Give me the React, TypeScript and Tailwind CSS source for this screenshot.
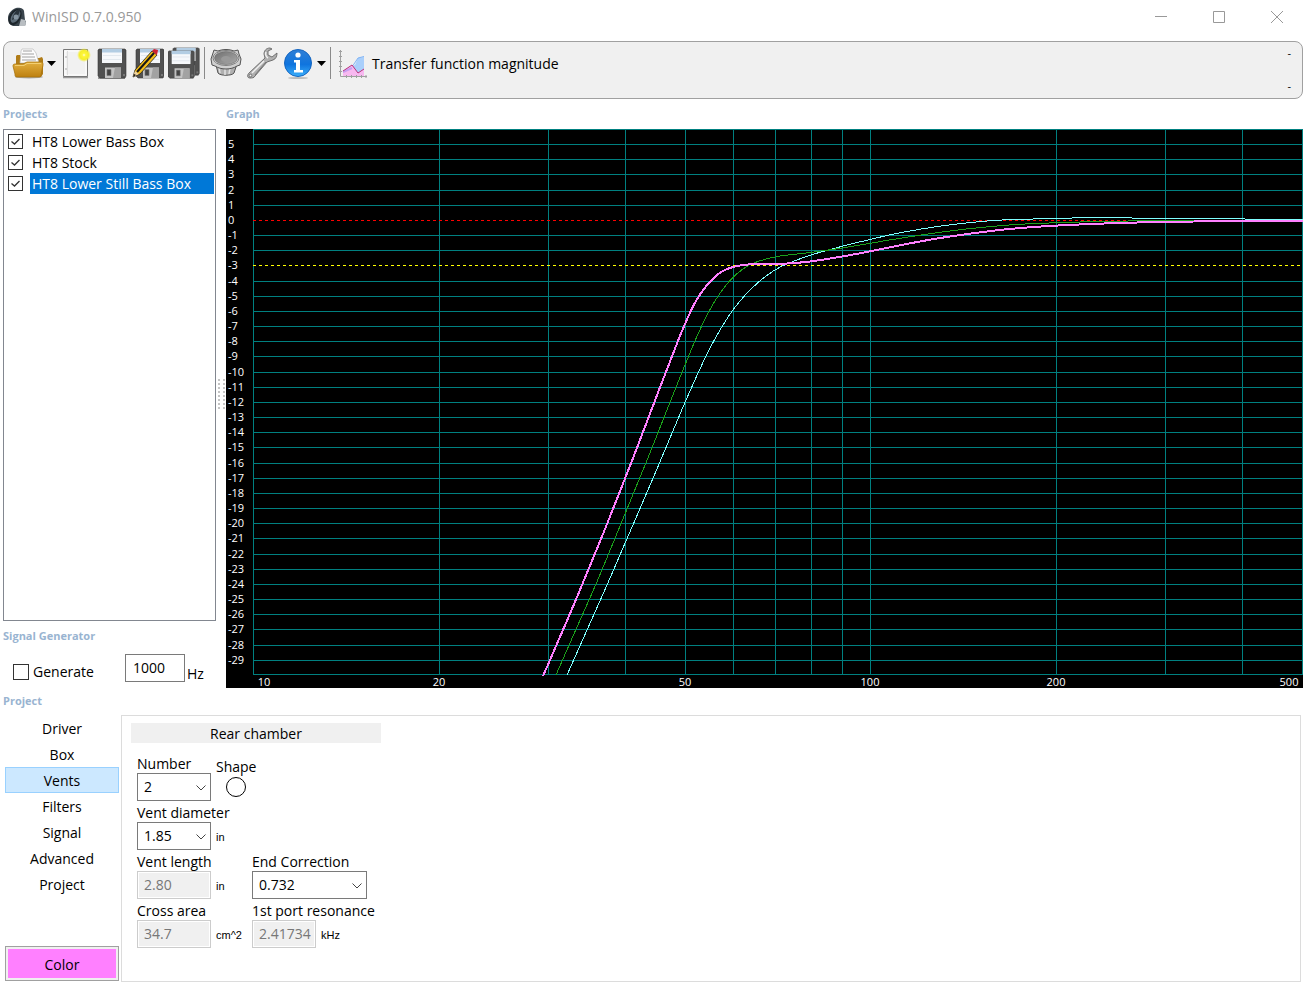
import { useState } from 'react';
import type { ReactNode } from 'react';
import clsx from 'clsx';

type Point = [number, number];

const TABS = ['Driver', 'Box', 'Vents', 'Filters', 'Signal', 'Advanced', 'Project'];

const PROJECTS = ['HT8 Lower Bass Box', 'HT8 Stock', 'HT8 Lower Still Bass Box'];

const DB_LINES = Array.from({ length: 35 }, (_, i) => 5 - i);
const FREQ_LINES = [10, 20, 30, 40, 50, 60, 70, 80, 90, 100, 200, 300, 400, 500];

// chart space: 10 Hz at x=253, one decade is 617.4 wide, six dB are 91 high
const freqX = (hz: number) => Math.round(253 + 617.4 * Math.log10(hz / 10)) + 0.5;
const dbY = (db: number) => Math.round(219.9 - (91 / 6) * db) + 0.5;

const FREQ_LABELS = [
  { hz: 10, x: 264 },
  { hz: 20, x: 439 },
  { hz: 50, x: 685 },
  { hz: 100, x: 870 },
  { hz: 200, x: 1056 },
  { hz: 500, x: 1289 },
];

const CURVES: { color: string; width: number; points: Point[] }[] = [
  {
    color: '#80ffff',
    width: 1,
    points: [
      [567, 675], [587.3, 629.3], [607.3, 584.3], [626, 541], [652.7, 479], [676.7, 422], [685.3, 401.7],
      [698.3, 372.5], [710, 348], [722.7, 325.5], [733.3, 309.5], [745, 295.3], [758.3, 282.3], [773.3, 271],
      [786.7, 264], [813.3, 254.3], [842.3, 246.3], [870, 239.5], [900, 232.8], [943.3, 225.7], [986.7, 221],
      [1010, 219.7], [1056.7, 218.4], [1096.7, 217.6], [1140, 218.1], [1230, 218.8], [1266, 219.3], [1303, 219.5],
    ],
  },
  {
    color: '#1ba11b',
    width: 1,
    points: [
      [556, 675], [576, 629.3], [596, 584], [614.7, 539], [639.5, 478.5], [651.7, 448.5], [675.7, 388],
      [685.7, 363.3], [694.3, 342.5], [701.7, 326], [709, 311.3], [718.3, 295.8], [730, 280.5], [743.3, 268.7],
      [755, 262.5], [776.7, 256.6], [811.7, 252.3], [842.3, 248], [870, 243.3], [900, 238.3], [938.3, 232.5],
      [971.7, 228.4], [1006.7, 225.2], [1040, 223.3], [1100, 221.5], [1166, 220.6], [1303, 220.5],
    ],
  },
  {
    color: '#ff80ff',
    width: 2,
    points: [
      [543, 676], [550, 660], [576, 599.5], [601, 539], [625, 478.5], [636.5, 449], [659, 390], [671, 359],
      [682, 331], [693, 306.5], [701, 293], [710, 281.7], [720, 272.8], [730, 267.9], [743, 265], [757, 264],
      [786, 263.6], [811.7, 261.3], [846.7, 255.7], [870, 251.3], [900, 245.3], [926.7, 240.3], [953.3, 236],
      [983.3, 231.9], [1013, 228.7], [1056, 225.6], [1121.7, 222.9], [1194, 221.5], [1233, 221], [1303, 221],
    ],
  },
];

// Catmull-Rom through the samples, written as cubic beziers
function smoothPath(points: Point[]) {
  let d = `M${points[0][0]} ${points[0][1]}`;
  for (let i = 0; i < points.length - 1; i++) {
    const [x1, y1] = points[i];
    const [x2, y2] = points[i + 1];
    const [x0, y0] = points[i - 1] ?? points[i];
    const [x3, y3] = points[i + 2] ?? points[i + 1];
    d += `C${x1 + (x2 - x0) / 6} ${y1 + (y2 - y0) / 6} ${x2 - (x3 - x1) / 6} ${y2 - (y3 - y1) / 6} ${x2} ${y2}`;
  }
  return d;
}

function LogoIcon() {
  return (
    <svg viewBox="0 0 20 20" className="h-5 w-5" aria-hidden="true">
      <path d="M9 1c4-1 8 1 8 3l1 9 1 2-1 4H6c-3-1-5-4-5-8S4 3 9 1z" fill="#39444c" />
      <path d="M14 12l4 1 1 3-1 3h-6z" fill="#b9bec2" />
      <ellipse cx="8" cy="10" rx="5.600" ry="8.800" transform="rotate(32 8 10)" fill="#1d252b" />
      <ellipse cx="8.500" cy="9.500" rx="3.800" ry="7" transform="rotate(32 8.500 9.500)" fill="#5d6c78" />
      <path d="M12 2c-4 2-6 6-7 11 3-1 7-4 8-10z" fill="#2a343c" />
      <circle cx="9" cy="10" r="2.500" fill="#8796a2" />
    </svg>
  );
}

function OpenIcon() {
  return (
    <svg viewBox="0 0 32 32" className="h-8 w-8" aria-hidden="true">
      <defs>
        <linearGradient id="folder" x1="0" y1="0" x2="0" y2="1">
          <stop offset="0" stopColor="#e3b040" />
          <stop offset="1" stopColor="#bd8010" />
        </linearGradient>
      </defs>
      <ellipse cx="17" cy="30" rx="14" ry="1.500" fill="#aaa" />
      <path d="M4 9l1-1h3l2 3h17l3-1 1 2v15l-2 3H4z" fill="#b07c18" />
      <path d="M9 6l-1 10h19l-3-10-3-4H10l-1 2z" fill="#fcfcfc" stroke="#bbb" strokeWidth=".7" />
      <path d="M11 4h9M10 7h12M10 10h13M10 13h14" stroke="#999" strokeWidth=".9" />
      <path d="M1 19c0-2 1-2 3-2h7l4-2h14c2 0 2 1 2 3l-2 10c0 2-1 2-3 2H5c-2 0-2-1-2-3z" fill="url(#folder)" stroke="#a8730c" strokeWidth=".8" />
      <path d="M3 18.500h9l3-2h14" stroke="#f8d880" strokeWidth=".8" fill="none" />
    </svg>
  );
}

function NewIcon() {
  return (
    <svg viewBox="0 0 32 32" className="h-8 w-8" aria-hidden="true">
      <defs>
        <radialGradient id="glow">
          <stop offset="0" stopColor="#fffde0" />
          <stop offset=".25" stopColor="#fdf53a" />
          <stop offset=".65" stopColor="#f5ee2c" />
          <stop offset="1" stopColor="#f5ee2c" stopOpacity="0" />
        </radialGradient>
      </defs>
      <path d="M3 30.500h25" stroke="#999" strokeWidth="1.500" />
      <path d="M3.500 2.500h24v27h-24z" fill="#f1f1f1" stroke="#777" />
      <path d="M5 4h21v24H5z" fill="none" stroke="#fff" />
      <path d="M7.500 4v24" stroke="#ddd" />
      <circle cx="6" cy="10" r=".7" fill="#888" />
      <circle cx="6" cy="22" r=".7" fill="#888" />
      <circle cx="24" cy="8" r="7" fill="url(#glow)" />
    </svg>
  );
}

function Floppy() {
  return (
    <>
      <path d="M2 2h26l1 1v26l-1 2H3l-2-2V3z" fill="#515151" stroke="#3a3a3a" strokeWidth=".6" />
      <path d="M5 2h20v14H5z" fill="#f6f8fb" />
      <path d="M5 2h20v3.500H5z" fill="#b3cde3" />
      <path d="M6 8.500h18M6 12.500h18" stroke="#e2e8ee" />
      <path d="M8 20.500h16V31H8z" fill="#c4c4c4" />
      <path d="M18 20.500h6V31h-8z" fill="#a2a2a2" />
      <path d="M10 22.500h4v6h-4z" fill="#444" stroke="#777" strokeWidth=".6" />
      <path d="M26 27h2v2h-2z" fill="#777" />
    </>
  );
}

function SaveIcon() {
  return (
    <svg viewBox="0 0 32 32" className="h-8 w-8" aria-hidden="true">
      <path d="M2 31h27" stroke="#777" strokeWidth="1.500" />
      <g transform="translate(1 0)">
        <Floppy />
      </g>
    </svg>
  );
}

function SaveAsIcon() {
  return (
    <svg viewBox="0 0 32 32" className="h-8 w-8" aria-hidden="true">
      <g transform="translate(3 0)">
        <Floppy />
      </g>
      <path d="M1 30l2-7L20 4l5 4L8 27z" fill="#f5bd17" stroke="#222" strokeWidth=".8" />
      <path d="M5 25L22 6" stroke="#171717" strokeWidth="2" />
      <path d="M20 4l2-2 4 1-1 5z" fill="#cf2030" />
      <path d="M1 30l2-6 4 3z" fill="#eed3a2" />
      <path d="M1 30l1-3 2 1z" fill="#111" />
    </svg>
  );
}

function SaveAllIcon() {
  return (
    <svg viewBox="0 0 32 32" className="h-8 w-8" aria-hidden="true">
      <g transform="translate(4 -1) scale(.94)">
        <Floppy />
      </g>
      <g transform="translate(-1 2) scale(.94)">
        <Floppy />
      </g>
    </svg>
  );
}

function DriverIcon() {
  return (
    <svg viewBox="0 0 32 32" className="h-8 w-8" aria-hidden="true">
      <defs>
        <linearGradient id="cone" x1="0" y1="0" x2="1" y2="1">
          <stop offset="0" stopColor="#6f6f6f" />
          <stop offset="1" stopColor="#ababab" />
        </linearGradient>
      </defs>
      <path d="M5 14l3 12c2 3 14 3 16 0l4-12z" fill="#b0b0b0" stroke="#555" />
      <path d="M9 20l1 6M15 22v6M20 21l-1 6" stroke="#e2e2e2" strokeWidth="1.500" />
      <path d="M4 3l4 1c5-2 11-2 16 0l4-1 1 4 2 5-1 6-3 1c-6 4-16 4-22 0l-3-1-1-6 2-6z" fill="#cfcfcf" stroke="#555" />
      <ellipse cx="16" cy="11" rx="13" ry="7.500" fill="#e6e6e6" stroke="#666" strokeWidth=".8" />
      <ellipse cx="16" cy="11" rx="11.500" ry="6.500" fill="url(#cone)" stroke="#666" strokeWidth=".6" />
      <ellipse cx="16" cy="12" rx="5" ry="3" fill="#999" />
    </svg>
  );
}

function WrenchIcon() {
  return (
    <svg viewBox="0 0 32 32" className="h-8 w-8" aria-hidden="true">
      <path
        d="M24 1c-4 0-6 3-6 6l1 4L3 26c-2 2-2 5 1 5 2 0 4 0 5-2l12-14c2-1 4-1 6-2 3-1 4-4 4-7l-5 4-4-2 0-4 4-2z"
        fill="#b0b0b0"
        stroke="#666"
        strokeWidth=".9"
        strokeLinejoin="round"
      />
      <path d="M18 14L6 26M20 5c-1 2 0 5 2 6" stroke="#f0f0f0" strokeWidth="1.500" fill="none" />
      <path d="M20 15L9 28" stroke="#777" />
      <circle cx="4.500" cy="28.500" r="1.300" fill="#f4f4f4" stroke="#555" strokeWidth=".7" />
    </svg>
  );
}

function InfoIcon() {
  return (
    <svg viewBox="0 0 32 32" className="h-8 w-8" aria-hidden="true">
      <defs>
        <linearGradient id="info" x1="0" y1="0" x2="0" y2="1">
          <stop offset="0" stopColor="#2f7fd6" />
          <stop offset=".55" stopColor="#0f74de" />
          <stop offset="1" stopColor="#3bb0fb" />
        </linearGradient>
      </defs>
      <ellipse cx="16" cy="31" rx="10" ry="1" fill="#bbb" />
      <circle cx="16" cy="16" r="13.500" fill="url(#info)" stroke="#1565c0" />
      <circle cx="16" cy="8" r="2.600" fill="#fff" />
      <path d="M12 13h6v10h3v2.500h-9V23h2v-7.500h-2z" fill="#fff" />
    </svg>
  );
}

function ChartIcon() {
  return (
    <svg viewBox="0 0 32 32" className="h-8 w-8" aria-hidden="true">
      <path d="M14 19l3-1 3-7 6-1v12l-6 4z" fill="#a9cffb" />
      <path d="M5 24l9-6 6 8 6-4v7H5z" fill="#f8b8f0" />
      <path d="M5 25l9-4" stroke="#c79cf0" strokeWidth="2" />
      <path d="M15 18.500l5-7.500 6-1.500" fill="none" stroke="#7db2f5" />
      <path d="M5 24l9-6 6 8 6-4" fill="none" stroke="#b8327a" />
      <path
        d="M2.500 3v26.500H29M1 4.500h3M1 9.500h3M1 14.500h3M1 19.500h3M1 24.500h3M8.500 28v3M13.500 28v3M18.500 28v3M23.500 28v3M28 28v3"
        fill="none"
        stroke="#a0a0a0"
      />
    </svg>
  );
}

function DropArrow({ label }: { label: string }) {
  return (
    <button type="button" aria-label={label} className="flex h-9 w-3 items-center">
      <svg viewBox="0 0 9 5" className="ml-px h-[5px] w-[9px]" aria-hidden="true">
        <path d="M0 0h9L4.500 5z" fill="#000" />
      </svg>
    </button>
  );
}

function ToolButton({ label, children }: { label: string; children: ReactNode }) {
  return (
    <button type="button" aria-label={label} title={label} className="flex h-9 w-9 items-center justify-center">
      {children}
    </button>
  );
}

function Separator() {
  return <div className="ml-0.5 mr-[3px] h-8 w-px bg-[#8a8a8a]" />;
}

function TitleBar() {
  return (
    <header className="flex h-[41px] items-start justify-between pl-[7px] pt-[5px]">
      <div className="flex h-6 items-center gap-[5px]">
        <LogoIcon />
        <h1 className="text-[14px] text-[#999]">WinISD 0.7.0.950</h1>
      </div>
      <div className="flex h-6 gap-[26px] pr-3.5 text-[#999]">
        <button type="button" aria-label="Minimize" className="flex w-8 items-center justify-center">
          <svg viewBox="0 0 12 12" className="h-3 w-3" fill="none" stroke="currentColor">
            <path d="M0 5.500h12" />
          </svg>
        </button>
        <button type="button" aria-label="Maximize" className="flex w-8 items-center justify-center">
          <svg viewBox="0 0 12 12" className="h-3 w-3" fill="none" stroke="currentColor">
            <path d="M.5.5h11v11H.5z" />
          </svg>
        </button>
        <button type="button" aria-label="Close" className="flex w-8 items-center justify-center">
          <svg viewBox="0 0 12 12" className="h-3 w-3" fill="none" stroke="currentColor">
            <path d="M0 0l12 12M12 0L0 12" />
          </svg>
        </button>
      </div>
    </header>
  );
}

function Toolbar() {
  return (
    <div className="ml-[3px] mr-1 flex h-[58px] justify-between rounded-lg border border-[#a0a0a0] bg-[#f0f0f0] pl-1.5 pr-[11px] pt-[3px]">
      <div className="flex h-9 items-center">
        <ToolButton label="Open project"><OpenIcon /></ToolButton>
        <DropArrow label="Recent projects" />
        <ToolButton label="New project"><NewIcon /></ToolButton>
        <ToolButton label="Save"><SaveIcon /></ToolButton>
        <ToolButton label="Save as"><SaveAsIcon /></ToolButton>
        <ToolButton label="Save all"><SaveAllIcon /></ToolButton>
        <Separator />
        <ToolButton label="Drivers"><DriverIcon /></ToolButton>
        <ToolButton label="Options"><WrenchIcon /></ToolButton>
        <ToolButton label="About"><InfoIcon /></ToolButton>
        <DropArrow label="Help topics" />
        <Separator />
        <button type="button" className="flex h-9 items-center gap-0.5 pl-1">
          <ChartIcon />
          <span className="pt-0.5">Transfer function magnitude</span>
        </button>
      </div>
      <div className="flex flex-col justify-between pb-1 text-[11px] leading-4">
        <span>-</span>
        <span>-</span>
      </div>
    </div>
  );
}

function SectionTitle({ className, children }: { className?: string; children: ReactNode }) {
  return (
    <h2 className={clsx('flex items-center text-[11px] font-bold text-[#99b4d1]', className)}>{children}</h2>
  );
}

function ProjectList() {
  const [checked, setChecked] = useState([true, true, true]);
  const selected = 2;

  return (
    <ul className="ml-[3px] w-[213px] flex-1 border border-[#828790] p-px">
      {PROJECTS.map((name, i) => (
        <li key={name}>
          <label className="flex h-[21px] items-center gap-[7px] pl-[3px]">
            <span className="relative h-[15px] w-[15px] shrink-0">
              <input
                type="checkbox"
                checked={checked[i]}
                onChange={() => setChecked(checked.map((c, j) => (j === i ? !c : c)))}
                className="block h-[15px] w-[15px] appearance-none border border-[#333] bg-white"
              />
              {checked[i] && (
                <svg viewBox="0 0 15 15" className="pointer-events-none absolute inset-0" fill="none" stroke="#333">
                  <path d="M3.500 7.500l3 2.500 5-5" strokeWidth="1.300" />
                </svg>
              )}
            </span>
            <span
              className={clsx(
                'flex h-[21px] flex-1 items-center pl-0.5',
                i === selected && 'bg-[#0078d7] text-white'
              )}
            >
              {name}
            </span>
          </label>
        </li>
      ))}
    </ul>
  );
}

function SignalGenerator() {
  return (
    <div className="flex h-[37px] items-start pl-[13px] pt-[3px]">
      <label className="flex h-[35px] w-28 items-center gap-1">
        <input type="checkbox" className="h-4 w-4 appearance-none border border-[#333] bg-white checked:bg-[#333]" />
        Generate
      </label>
      <label className="flex items-start gap-0.5">
        <input
          type="text"
          aria-label="Frequency in Hz"
          defaultValue="1000"
          className="h-7 w-[60px] border border-[#7a7a7a] bg-white px-[7px] pb-0.5"
        />
        <span className="pt-2.5">Hz</span>
      </label>
    </div>
  );
}

function Graph() {
  return (
    <svg
      viewBox="226 129 1077 559"
      className="block h-auto w-full bg-black text-[11px]"
      role="img"
      aria-label="Transfer function magnitude"
    >
      <g stroke="#008080" shapeRendering="crispEdges">
        <path d="M253 129.500h1050M253 674.500h1050" />
        {DB_LINES.filter((db) => db !== 0 && db !== -3).map((db) => (
          <line key={db} x1="253" x2="1303" y1={dbY(db)} y2={dbY(db)} />
        ))}
        {FREQ_LINES.map((hz) => (
          <line key={hz} x1={freqX(hz)} x2={freqX(hz)} y1="129" y2="675" />
        ))}
        <line x1="253" x2="1303" y1={dbY(0)} y2={dbY(0)} stroke="#ff0000" strokeDasharray="3 3" />
        <line x1="253" x2="1303" y1={dbY(-3)} y2={dbY(-3)} stroke="#ffff00" strokeDasharray="3 3" />
      </g>
      <g fill="none" shapeRendering="crispEdges">
        {CURVES.map((curve) => (
          <path key={curve.color} d={smoothPath(curve.points)} stroke={curve.color} strokeWidth={curve.width} />
        ))}
      </g>
      <g fill="#fff">
        {DB_LINES.map((db) => (
          <text key={db} x="228" y={dbY(db) + 3.5}>
            {db}
          </text>
        ))}
        {FREQ_LABELS.map(({ hz, x }) => (
          <text key={hz} x={x} y="686" textAnchor="middle">
            {hz}
          </text>
        ))}
      </g>
    </svg>
  );
}

function Unit({ children }: { children: ReactNode }) {
  return <span className="w-[37px] pl-px pt-7 font-['Liberation_Sans',sans-serif] text-[11px] leading-4">{children}</span>;
}

function FieldLabel({ children }: { children: ReactNode }) {
  return <span className="flex h-[21px] items-center whitespace-nowrap pt-0.5">{children}</span>;
}

function SelectField({ label, value, className }: { label: string; value: string; className: string }) {
  return (
    <label className={clsx('mr-1 block', className)}>
      <FieldLabel>{label}</FieldLabel>
      <span className="relative block">
        <select defaultValue={value} className="block h-7 w-full appearance-none border border-[#7a7a7a] bg-white px-1.5">
          <option>{value}</option>
        </select>
        <svg viewBox="0 0 10 6" className="pointer-events-none absolute right-[5px] top-3 h-1.5 w-2.5" fill="none" stroke="#444">
          <path d="M.5.5L5 5 9.500.5" />
        </svg>
      </span>
    </label>
  );
}

function ReadOnlyField({ label, value, className }: { label: string; value: string; className: string }) {
  return (
    <label className={clsx('mr-1 block', className)}>
      <FieldLabel>{label}</FieldLabel>
      <input
        type="text"
        disabled
        defaultValue={value}
        className="block h-7 w-full border border-[#ccc] bg-[#f0f0f0] pb-0.5 pl-1.5 pr-0.5 text-[#777] ring-1 ring-inset ring-white"
      />
    </label>
  );
}

function VentsPanel() {
  return (
    <section className="mr-1.5 min-h-[267px] flex-1 border border-[#dcdcdc] pl-[9px] pt-[7px]">
      <h3 className="flex h-5 w-[250px] items-center justify-center bg-[#f0f0f0] pt-0.5">Rear chamber</h3>
      <form className="pl-1.5 pt-[9px]">
        <div className="flex h-[49px]">
          <SelectField label="Number" value="2" className="w-[74px]" />
          <div className="flex flex-col items-center pl-px pt-1">
            <span className="flex h-[21px] items-center">Shape</span>
            <button type="button" aria-label="Round vent" className="h-5 w-5 rounded-full border border-black" />
          </div>
        </div>
        <div className="flex h-[49px]">
          <SelectField label="Vent diameter" value="1.85" className="w-[74px]" />
          <Unit>in</Unit>
        </div>
        <div className="flex h-[49px]">
          <ReadOnlyField label="Vent length" value="2.80" className="w-[74px]" />
          <Unit>in</Unit>
          <SelectField label="End Correction" value="0.732" className="w-[115px]" />
        </div>
        <div className="flex h-[49px]">
          <ReadOnlyField label="Cross area" value="34.7" className="w-[74px]" />
          <Unit>cm^2</Unit>
          <ReadOnlyField label="1st port resonance" value="2.41734" className="w-16" />
          <Unit>kHz</Unit>
        </div>
      </form>
    </section>
  );
}

export default function App() {
  const [tab, setTab] = useState('Vents');

  return (
    <div className="min-h-screen bg-white font-['Open_Sans','Noto_Sans',sans-serif] text-[14px] leading-5 text-black">
      <TitleBar />
      <Toolbar />

      <div className="mr-1 flex">
        <div className="flex w-[216px] shrink-0 flex-col">
          <SectionTitle className="h-[30px] pl-[3px]">Projects</SectionTitle>
          <ProjectList />
          <SectionTitle className="h-[30px] pl-[3px]">Signal Generator</SectionTitle>
          <SignalGenerator />
        </div>
        <div className="flex w-2.5 shrink-0 items-center justify-center">
          <svg viewBox="0 0 8 30" className="h-[30px] w-2" aria-hidden="true">
            <path d="M2 0v30M7 0v30" stroke="#c4c4c4" strokeWidth="2" strokeDasharray="2 2" />
          </svg>
        </div>
        <div className="min-w-0 flex-1">
          <SectionTitle className="h-[30px]">Graph</SectionTitle>
          <Graph />
        </div>
      </div>

      <SectionTitle className="h-[27px] pb-0.5 pl-[3px]">Project</SectionTitle>
      <div className="flex">
        <div className="flex w-[121px] flex-col justify-between pb-px pl-[5px] pr-0.5">
          <nav className="flex flex-col">
            {TABS.map((name) => (
              <button
                key={name}
                type="button"
                onClick={() => setTab(name)}
                className={clsx(
                  'flex h-[26px] items-center justify-center border pt-0.5',
                  name === tab ? 'border-[#99d1ff] bg-[#cce8ff]' : 'border-transparent'
                )}
              >
                {name}
              </button>
            ))}
          </nav>
          <button type="button" className="h-[35px] border border-[#a0a0a0] bg-[#f0f0f0] p-0.5">
            <span className="flex h-full items-center justify-center bg-[#ff80ff] pt-0.5">Color</span>
          </button>
        </div>
        <VentsPanel />
      </div>
    </div>
  );
}
